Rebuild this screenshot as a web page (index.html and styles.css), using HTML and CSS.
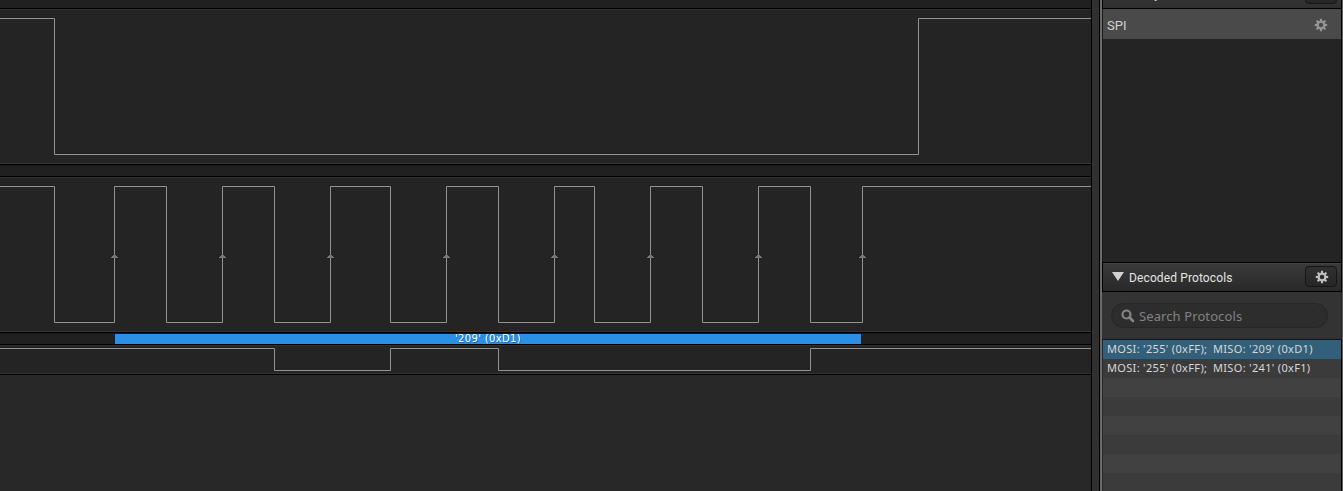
FILE: index.html
```html
<!DOCTYPE html>
<html lang="en">
<head>
<meta charset="utf-8">
<title>Logic analyzer</title>
<link rel="stylesheet" href="styles.css">
</head>
<body>
<svg class="defs" width="0" height="0">
  <symbol id="gear" viewBox="-7 -7 14 14">
    <circle r="3.3" fill="none" stroke="currentColor" stroke-width="2.1"/>
    <g fill="currentColor">
      <path id="tooth" d="M-1-6.200H1L1.200-3.800H-1.200Z"/>
      <use href="#tooth" transform="rotate(45)"/>
      <use href="#tooth" transform="rotate(90)"/>
      <use href="#tooth" transform="rotate(135)"/>
      <use href="#tooth" transform="rotate(180)"/>
      <use href="#tooth" transform="rotate(225)"/>
      <use href="#tooth" transform="rotate(270)"/>
      <use href="#tooth" transform="rotate(315)"/>
    </g>
  </symbol>
  <symbol id="arrow" viewBox="0 0 7 4"><path d="M3 0h1v1h1v1h1v1h1v1H0V3h1V2h1V1h1z" fill="#777"/></symbol>
</svg>
<div class="app">
  <main class="waves">
    <div class="strip strip-top"></div>
    <section class="channel enable">
      <svg width="1091" height="154"><path class="trace" d="M0 8.500H54.500V144.500H918.500V8.500H1091"/></svg>
    </section>
    <div class="strip strip-mid"></div>
    <section class="channel clock">
      <svg width="1091" height="154">
        <path class="trace" d="M0 8.500H54.500V144.500H114.500V8.500H166.500V144.500H222.500V8.500H274.500V144.500H330.500V8.500H390.500V144.500H446.500V8.500H498.500V144.500H554.500V8.500H594.500V144.500H650.500V8.500H702.500V144.500H758.500V8.500H810.500V144.500H862.500V8.500H1091"/>
        <use href="#arrow" x="111" y="76" width="7" height="4"/>
        <use href="#arrow" x="219" y="76" width="7" height="4"/>
        <use href="#arrow" x="327" y="76" width="7" height="4"/>
        <use href="#arrow" x="443" y="76" width="7" height="4"/>
        <use href="#arrow" x="551" y="76" width="7" height="4"/>
        <use href="#arrow" x="647" y="76" width="7" height="4"/>
        <use href="#arrow" x="755" y="76" width="7" height="4"/>
        <use href="#arrow" x="859" y="76" width="7" height="4"/>
      </svg>
    </section>
    <div class="strip strip-decode"><div class="byte"><span>'209' (0xD1)</span></div></div>
    <section class="channel data">
      <svg width="1091" height="28"><path class="trace" d="M0 2.500H274.500V24.500H390.500V2.500H498.500V24.500H810.500V2.500H1091"/></svg>
    </section>
  </main>
  <div class="splitter"></div>
  <aside class="side">
    <header class="head head-cut">
      <span class="cut-title">Analyzers</span>
      <button class="btn" aria-label="Add"></button>
    </header>
    <div class="analyzers">
      <div class="analyzer"><span>SPI</span><svg class="gear" width="14" height="14"><use href="#gear"/></svg></div>
    </div>
    <header class="head">
      <svg class="caret" width="12" height="9"><path d="M0 0H12L6 9Z" fill="#d2d2d2"/></svg>
      <span class="title">Decoded Protocols</span>
      <button class="btn" aria-label="Settings"><svg width="14" height="14"><use href="#gear"/></svg></button>
    </header>
    <div class="search-area">
      <div class="search">
        <svg width="14" height="14" fill="none" stroke="#858585"><circle cx="5.500" cy="5.500" r="4" stroke-width="2.200"/><path d="M8.500 8.500L12 12" stroke-width="2.600" stroke-linecap="round"/></svg>
        <span>Search Protocols</span>
      </div>
    </div>
    <div class="results">
      <div class="row selected"><span class="mosi">MOSI: '255' (0xFF);</span><span class="miso">MISO: '209' (0xD1)</span></div>
      <div class="row"><span class="mosi">MOSI: '255' (0xFF);</span><span class="miso">MISO: '241' (0xF1)</span></div>
      <div class="row"></div><div class="row"></div><div class="row"></div><div class="row"></div><div class="row"></div><div class="row"></div>
    </div>
  </aside>
</div>
</body>
</html>
```
FILE: styles.css
```css
* { box-sizing: border-box; }
body { margin: 0; background: #282828; overflow: hidden; }
svg { display: block; flex: none; }
.defs { position: absolute; }
.app { display: flex; width: 1343px; height: 491px; }
.waves { width: 1091px; background: #282828; }
.strip { background: #202020; border-top: 1px solid #000; border-bottom: 1px solid #000; }
.strip-top { height: 9px; border-top: 0; }
.strip-mid { height: 13px; box-shadow: inset 0 1px #181818; }
.strip-decode { height: 13px; padding: 1px 0 0 115px; box-shadow: inset 0 1px #181818; }
.channel { background: #242424; border-top: 1px solid #303030; border-bottom: 1px solid #343434; }
.enable, .clock { height: 155px; }
.enable svg, .clock svg { height: 153px; }
.data { height: 30px; border-bottom: 1px solid #000; box-shadow: inset 0 -1px #343434; }
.trace { fill: none; stroke: #929292; stroke-width: 1; }
.byte { display: flex; justify-content: center; width: 746px; height: 10px; background: #2b90e5; color: #fff; font: 10px/10px "DejaVu Sans", sans-serif; letter-spacing: 0.35px; white-space: nowrap; text-shadow: 1px 1px rgba(0, 0, 0, .3); }
.splitter { width: 11px; background: #303030; border-left: 1px solid #000; border-right: 2px solid #6b6b6b; box-shadow: inset -1px 0 #000; }
.side { width: 241px; height: 491px; display: flex; flex-direction: column; background: #333; border-right: 1px solid #606060; overflow: hidden; font-family: Roboto, sans-serif; }
.head { display: flex; align-items: center; height: 30px; flex: none; padding: 0 4px 1px 9px; border: 1px solid #000; background: linear-gradient(#3a3a3a, #292929); box-shadow: inset 0 1px #454545; }
.head-cut { margin-top: -21px; background: linear-gradient(#3a3a3a, #2f2f2f); }
.cut-title { font: 400 12px/14px Roboto, sans-serif; letter-spacing: 0.1px; color: #ddd; margin-left: 18px; }
.title { font: 400 12px/14px Roboto, sans-serif; letter-spacing: 0.12px; color: #e4e4e4; margin: 2px 0 0 5px; white-space: nowrap; }
.btn { width: 32px; height: 21px; margin-left: auto; padding: 0 0 0 1px; display: flex; align-items: center; justify-content: center; border: 1px solid #151515; border-radius: 4px; background: linear-gradient(#303030, #262626); color: #c0c0c0; }
.caret { margin-top: -1px; }
.analyzers { height: 253px; flex: none; background: #242424; border-left: 1px solid #1b1b1b; border-right: 1px solid #000; }
.analyzer { display: flex; align-items: center; justify-content: space-between; height: 30px; padding: 2px 13px 0 4px; background: #4a4a4a; color: #d2d2d2; font-size: 13px; }
.analyzer .gear { color: #969696; margin-top: -1px; }
.search-area { height: 48px; flex: none; padding: 11px 13px 0 9px; background: #333; border-bottom: 1px solid #141414; border-right: 1px solid #222; }
.search { display: flex; align-items: center; gap: 4px; height: 25px; padding-left: 9px; border: 1px solid #262626; border-radius: 13px; background: #2d2d2d; color: #828282; font: 13px/18px "Noto Sans", sans-serif; letter-spacing: 0.1px; white-space: nowrap; }
.results { border-left: 1px solid #2b2b2b; border-right: 1px solid #000; }
.row { display: flex; height: 19px; padding-left: 4px; background: #414141; color: #d8d8d8; font: 11px/17px "Noto Sans", sans-serif; letter-spacing: 0.33px; white-space: nowrap; }
.row:nth-child(even) { background: #3b3b3b; }
.row.selected { background: #32607b; }
.mosi { width: 106px; }
```
